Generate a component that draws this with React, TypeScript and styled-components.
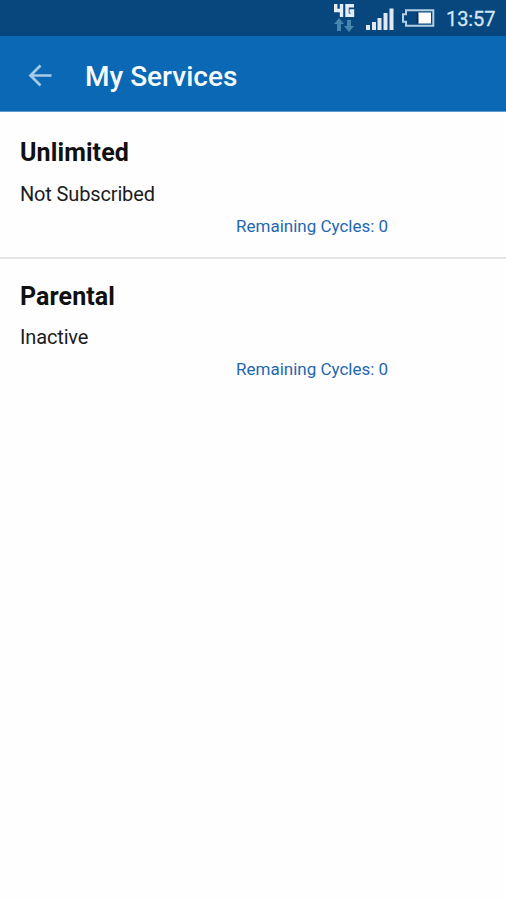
import React from "react";
import styled, { createGlobalStyle } from "styled-components";

const GlobalStyle = createGlobalStyle`
  * { box-sizing: border-box; }
  body { margin: 0; background: #fefefe; font-family: Roboto, sans-serif; }
  h1, h2, p { margin: 0; font-weight: 400; }
`;

const Screen = styled.div`
  width: 100%;
  min-height: 900px;
  background: #fefefe;
  overflow: hidden;
`;

const StatusBar = styled.div`
  height: 36px;
  background: #07477d;
  display: flex;
  justify-content: flex-end;
  align-items: flex-start;
  padding-right: 11px;
`;

const StatusIcons = styled.svg`
  display: block;
  width: 106px;
  height: 36px;
  margin-right: 6px;
`;

const Clock = styled.span`
  color: #d5e5f3;
  font-size: 20px;
  line-height: 24px;
  padding-top: 7px;
  width: 49px;
  white-space: nowrap;
  letter-spacing: -0.1px;
  -webkit-text-stroke: 0.3px #d5e5f3;
`;

const AppBar = styled.header`
  height: 76px;
  background: #0a68b4;
  border-bottom: 1px solid #5f9ccf;
  display: flex;
  align-items: center;
  padding: 4px 0 0 28px;
`;

const BackButton = styled.button`
  border: 0;
  padding: 0;
  background: none;
  width: 24px;
  height: 24px;
  margin-right: 33px;
  svg { display: block; }
`;

const Title = styled.h1`
  color: #f5faff;
  font-size: 28px;
  line-height: 34px;
  font-weight: 500;
  padding-top: 2px;
  white-space: nowrap;
`;

const ServiceRow = styled.section<{ $divided?: boolean }>`
  height: ${(p) => (p.$divided ? 147 : 144)}px;
  padding: ${(p) => (p.$divided ? 26 : 23)}px 20px 0;
  border-bottom: ${(p) => (p.$divided ? "2px solid #e4e4e4" : "0")};
`;

const ServiceName = styled.h2`
  color: #111;
  font-size: 25px;
  line-height: 30px;
  font-weight: 700;
  letter-spacing: 0.1px;
`;

const ServiceStatus = styled.p<{ $tight?: boolean }>`
  color: #1c1c1c;
  font-size: 20px;
  line-height: 24px;
  margin-top: ${(p) => (p.$tight ? 13 : 14)}px;
  letter-spacing: -0.15px;
`;

const Cycles = styled.p`
  color: #1f67b0;
  font-size: 17px;
  line-height: 20px;
  margin: 10px 0 0 216px;
  white-space: nowrap;
`;

const services = [
  { name: "Unlimited", status: "Not Subscribed", cycles: 0 },
  { name: "Parental", status: "Inactive", cycles: 0 },
];

export default function App() {
  return (
    <Screen>
      <GlobalStyle />
      <StatusBar>
        <StatusIcons viewBox="334 0 106 36">
          <g fill="none" stroke="#e3edf5" strokeWidth="3.400">
            <path d="M335.7 4v6.500h6.500M341.500 4v13" />
            <path d="M354 5.700H347v9.600h5.500V11H349.500" />
          </g>
          <g fill="#4685ad">
            <path d="M339 18l5 6h-3v7h-4v-7h-3z" />
            <path d="M349 32l-5-6h3v-6h4v6h3z" />
          </g>
          <g fill="#e0e9f2">
            <path d="M366 25h4v5h-4zM372 22h4v8h-4zM377.500 18h4v12h-4zM383.500 13h4v17h-4zM389.500 8.500h4v21.500h-4z" />
          </g>
          <path
            d="M406 10.200h27.300v15.600H406v-4h-3v-7.600h3z"
            fill="none"
            stroke="#b3cfe4"
            strokeWidth="2"
          />
          <path d="M418 12.500h13v11h-13z" fill="#fff" />
          <path d="M416.500 12.500h2v11h-2z" fill="#052e68" />
        </StatusIcons>
        <Clock>13:57</Clock>
      </StatusBar>
      <AppBar>
        <BackButton aria-label="Back">
          <svg width="24" height="24" viewBox="0 0 24 24">
            <path
              d="M23.500 11.500H3M12.500 1.500l-10 10 10 10"
              fill="none"
              stroke="#a6cbe9"
              strokeWidth="2.700"
            />
          </svg>
        </BackButton>
        <Title>My Services</Title>
      </AppBar>
      <main>
        {services.map((service, i) => (
          <ServiceRow key={service.name} $divided={i < services.length - 1}>
            <ServiceName>{service.name}</ServiceName>
            <ServiceStatus $tight={i > 0}>{service.status}</ServiceStatus>
            <Cycles>Remaining Cycles: {service.cycles}</Cycles>
          </ServiceRow>
        ))}
      </main>
    </Screen>
  );
}
